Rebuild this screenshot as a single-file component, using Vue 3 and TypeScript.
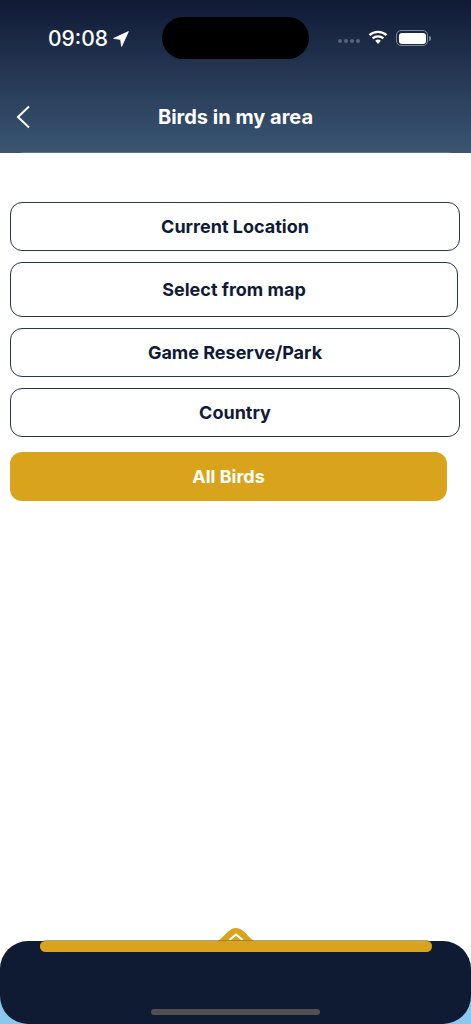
<script setup lang="ts">
interface Choice {
  label: string
  kind: string
}

const choices: Choice[] = [
  { label: 'Current Location', kind: 'first' },
  { label: 'Select from map', kind: 'map' },
  { label: 'Game Reserve/Park', kind: 'park' },
  { label: 'Country', kind: 'country' },
  { label: 'All Birds', kind: 'all' },
]
</script>

<template>
  <div class="screen">
    <header class="top">
      <div class="status">
        <div class="time">
          <span>09:08</span>
          <svg class="loc" viewBox="0 0 16 16" width="16" height="16">
            <path d="M15.4 0.6 L0.6 7.4 L7.6 8.4 L8.6 15.4 Z" fill="#fff" stroke="#fff" stroke-width="0.8" stroke-linejoin="round" />
          </svg>
        </div>
        <div class="island"></div>
        <div class="sys">
          <div class="dots"><i></i><i></i><i></i><i></i></div>
          <svg class="wifi" viewBox="0 0 20 15" width="20" height="15">
            <path d="M1.5 5.2 A12.5 12.5 0 0 1 18.5 5.2 M4.6 8.4 A8.2 8.2 0 0 1 15.4 8.4" fill="none" stroke="#fff" stroke-width="2.4" />
            <path d="M7.2 10.8 A4.2 4.2 0 0 1 12.8 10.8 L10 14 Z" fill="#fff" />
          </svg>
          <div class="battery"><b></b></div>
          <div class="cap"></div>
        </div>
      </div>
      <div class="navbar">
        <svg class="back" viewBox="0 0 14 24" width="14" height="24">
          <path d="M13 1.5 L2 12 L13 22.5" fill="none" stroke="#fff" stroke-width="2" />
        </svg>
        <h1>Birds in my area</h1>
        <span></span>
      </div>
    </header>

    <main class="card">
      <button v-for="c in choices" :key="c.label" class="choice" :class="c.kind">{{ c.label }}</button>
    </main>

    <footer class="sheet-wrap">
      <div class="sheet">
        <div class="home"></div>
      </div>
      <div class="handle">
        <svg class="hump" viewBox="0 0 44 14" width="44" height="14">
          <path d="M0 14 C8 14 13 0 22 0 C31 0 36 14 44 14 Z" fill="#d9a31b" />
          <path d="M16 11.5 L22 6.5 L28 11.5" fill="none" stroke="#fff" stroke-width="2.2" stroke-linecap="round" stroke-linejoin="round" />
        </svg>
        <div class="bar"></div>
      </div>
    </footer>
  </div>
</template>

<style scoped>
.screen {
  width: 471px;
  height: 1024px;
  display: flex;
  flex-direction: column;
  overflow: hidden;
  background: #fff;
  font-family: Inter, "Liberation Sans", sans-serif;
}
.top {
  height: 153px;
  flex: none;
  background: linear-gradient(180deg, #101a35 0%, #3a5673 100%);
  color: #fff;
}
.status {
  height: 59px;
  padding: 17px 0 0 48px;
  box-sizing: border-box;
  display: flex;
  align-items: flex-start;
}
.time {
  width: 114px;
  height: 42px;
  display: flex;
  align-items: center;
  gap: 5px;
  font-size: 21px;
  font-weight: 500;
}
.loc {
  margin-top: 1px;
}
.island {
  width: 147px;
  height: 42px;
  border-radius: 21px;
  background: #000;
}
.sys {
  height: 42px;
  display: flex;
  align-items: center;
  margin-left: 29px;
}
.dots {
  display: flex;
  gap: 2px;
  margin-top: 5px;
}
.dots i {
  width: 4px;
  height: 4px;
  border-radius: 50%;
  background: #56657b;
}
.wifi {
  margin-left: 8px;
  margin-top: -1px;
}
.battery {
  width: 32px;
  height: 16px;
  margin-left: 8px;
  box-sizing: border-box;
  border: 1px solid #7a879b;
  border-radius: 5px;
  padding: 1.5px;
}
.battery b {
  display: block;
  height: 100%;
  border-radius: 3px;
  background: #fff;
}
.cap {
  width: 1.5px;
  height: 5px;
  margin-left: 1px;
  border-radius: 0 2px 2px 0;
  background: #7a879b;
}
.navbar {
  margin-top: 37px;
  height: 42px;
  display: grid;
  grid-template-columns: 1fr auto 1fr;
  align-items: center;
}
.back {
  margin-left: 15.5px;
}
h1 {
  margin: 0;
  font-size: 20px;
  font-weight: 700;
  line-height: 42px;
  white-space: nowrap;
}
.card {
  flex: 1;
  background: #fff;
  border-radius: 24px 24px 0 0;
  margin-top: -0.5px;
  padding: 49px 10px 0;
  display: flex;
  flex-direction: column;
  align-items: flex-start;
  box-shadow: 0 0 0 0.5px rgba(255, 255, 255, 0.4);
}
.choice {
  width: 450px;
  height: 49px;
  flex: none;
  box-sizing: border-box;
  border: 1.5px solid #2a3450;
  border-radius: 12px;
  background: #fff;
  color: #0f1b36;
  font-family: inherit;
  font-size: 18px;
  font-weight: 700;
  padding: 0;
}
.map {
  width: 448px;
  height: 55px;
  margin-top: 11.5px;
}
.park {
  margin-top: 10.5px;
}
.country {
  margin-top: 11px;
}
.all {
  width: 437px;
  height: 49px;
  margin-top: 15.5px;
  border: none;
  background: #d9a31b;
  color: #fff;
}
.sheet-wrap {
  height: 83px;
  flex: none;
  position: relative;
  background: linear-gradient(180deg, #fff 0%, #fff 50%, #8ac8f0 50%, #8ac8f0 100%);
}
.sheet {
  height: 100%;
  background: #0f1b33;
  border-radius: 28px;
  display: flex;
  align-items: flex-end;
  justify-content: center;
}
.home {
  width: 169px;
  height: 6px;
  margin-bottom: 9.5px;
  border-radius: 3px;
  background: #505050;
}
.handle {
  position: absolute;
  left: 39.5px;
  right: 39.5px;
  top: -13px;
  display: flex;
  flex-direction: column;
  align-items: center;
}
.hump {
  display: block;
  margin-bottom: -1px;
}
.bar {
  align-self: stretch;
  height: 11px;
  border-radius: 5.5px;
  background: #d9a31b;
  box-shadow: 0 -1px 0 rgba(120, 105, 70, 0.6);
}
</style>
